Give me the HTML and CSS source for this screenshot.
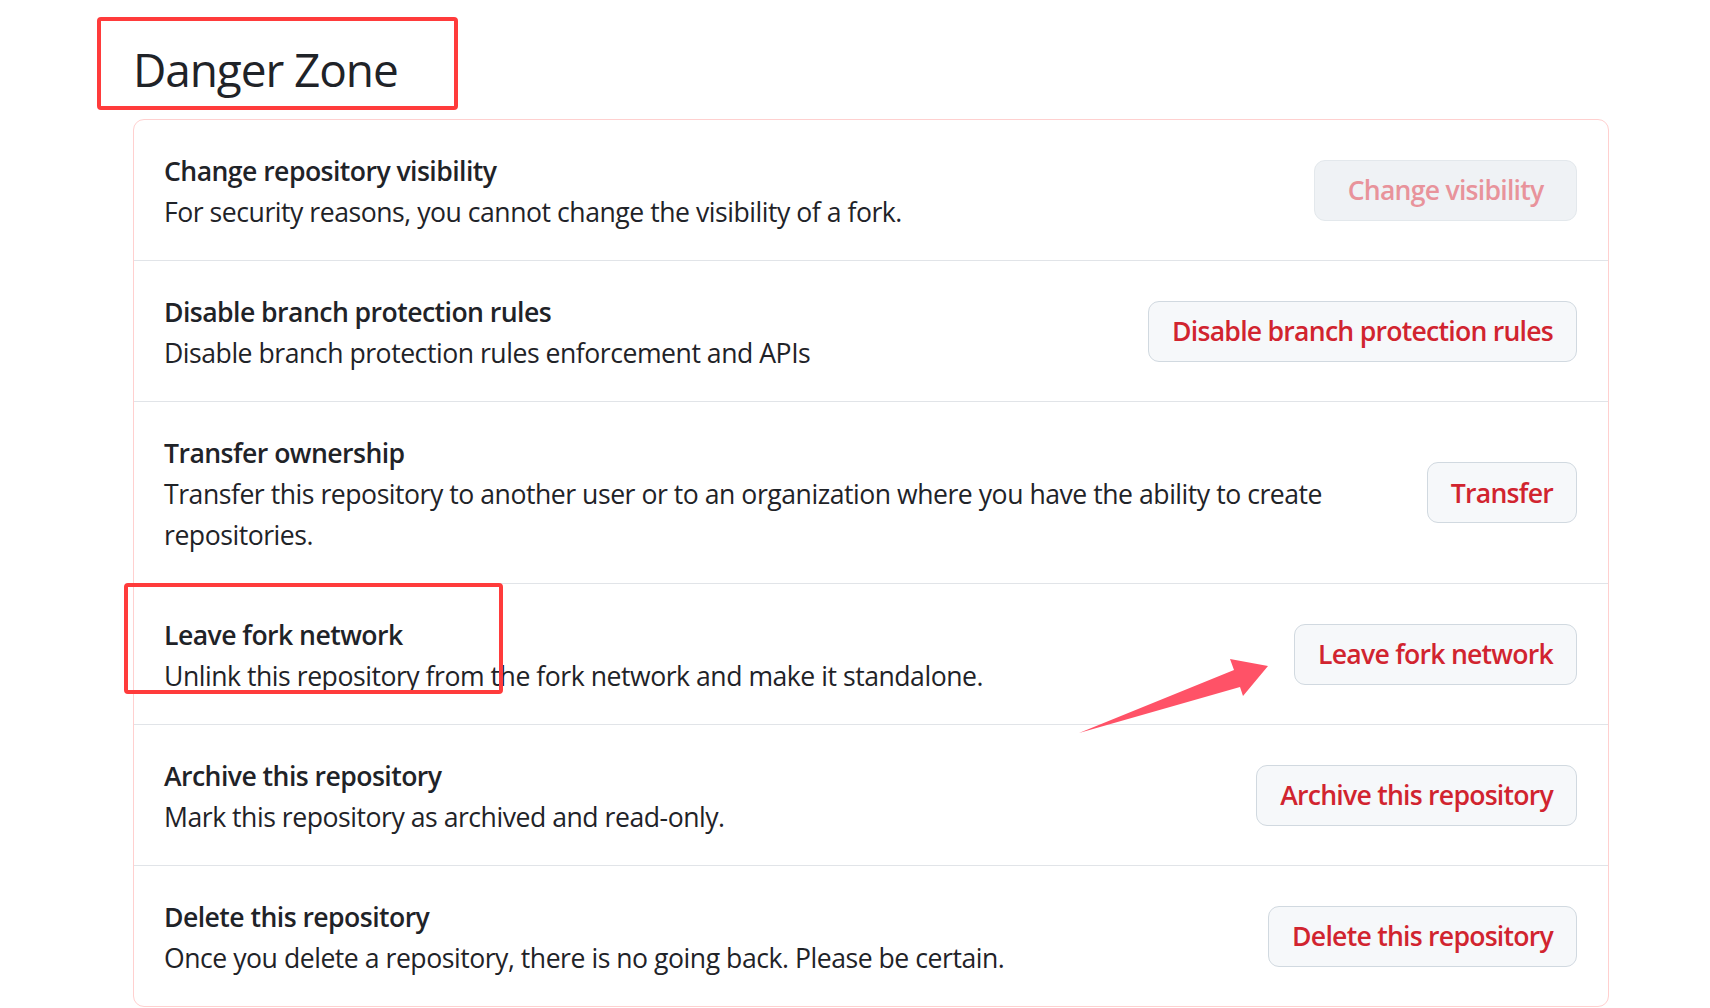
FILE: index.html
```html
<!DOCTYPE html>
<html lang="en">
<head>
<meta charset="utf-8">
<title>Danger Zone</title>
<link rel="stylesheet" href="styles.css">
</head>
<body>
<main class="page">
  <h2 class="heading">Danger Zone</h2>
  <section class="card">
    <div class="row">
      <div class="info">
        <strong class="title">Change repository visibility</strong>
        <p class="desc">For security reasons, you cannot change the visibility of a fork.</p>
      </div>
      <button class="btn btn-disabled" disabled>Change visibility</button>
    </div>
    <div class="row">
      <div class="info">
        <strong class="title">Disable branch protection rules</strong>
        <p class="desc">Disable branch protection rules enforcement and APIs</p>
      </div>
      <button class="btn">Disable branch protection rules</button>
    </div>
    <div class="row">
      <div class="info">
        <strong class="title">Transfer ownership</strong>
        <p class="desc">Transfer this repository to another user or to an organization where you have the ability to create repositories.</p>
      </div>
      <button class="btn">Transfer</button>
    </div>
    <div class="row">
      <div class="info">
        <strong class="title">Leave fork network</strong>
        <p class="desc">Unlink this repository from the fork network and make it standalone.</p>
      </div>
      <button class="btn">Leave fork network</button>
    </div>
    <div class="row">
      <div class="info">
        <strong class="title">Archive this repository</strong>
        <p class="desc">Mark this repository as archived and read-only.</p>
      </div>
      <button class="btn">Archive this repository</button>
    </div>
    <div class="row">
      <div class="info">
        <strong class="title">Delete this repository</strong>
        <p class="desc">Once you delete a repository, there is no going back. Please be certain.</p>
      </div>
      <button class="btn">Delete this repository</button>
    </div>
  </section>
</main>
<div class="mark mark-heading"></div>
<div class="mark mark-fork"></div>
<svg class="arrow" width="200" height="80" viewBox="1075 655 200 80" xmlns="http://www.w3.org/2000/svg">
  <polygon points="1079,733 1234,670 1230,659 1268,666 1243,696 1240,687" fill="#ff5267"/>
</svg>
</body>
</html>
```
FILE: styles.css
```css
html, body {
  margin: 0;
  padding: 0;
  background: #ffffff;
}
body {
  position: relative;
  width: 1710px;
  height: 1008px;
  overflow: hidden;
  font-family: "Open Sans", "Noto Sans", sans-serif;
  color: #1f2328;
}
.page {
  padding-left: 133px;
  width: 1476px;
}
.heading {
  margin: 35px 0 15px 0;
  font-size: 46px;
  font-weight: 400;
  line-height: 69px;
  letter-spacing: -1.1px;
  color: #1f2328;
}
.card {
  border: 1px solid #ffd0cf;
  border-radius: 11px;
}
.row {
  display: flex;
  align-items: center;
  gap: 32px;
  padding: 31px 31px 27px 30px;
  border-top: 1px solid #e1e4e8;
}
.row:first-child {
  border-top: none;
}
.info {
  flex: 1;
  min-width: 0;
  font-size: 26.6px;
  line-height: 41px;
  letter-spacing: -0.47px;
}
.title {
  display: block;
  font-weight: 600;
  letter-spacing: -0.55px;
}
.desc {
  margin: 0;
}
.btn {
  flex: none;
  height: 61px;
  margin-top: -4px;
  padding: 0 23px;
  font-family: "Open Sans", "Noto Sans", sans-serif;
  font-size: 26.6px;
  font-weight: 600;
  letter-spacing: -0.75px;
  color: #d1242f;
  background: #f6f8fa;
  border: 1px solid #d1d9e0;
  border-radius: 11px;
}
.btn-disabled {
  padding: 0 32.5px;
  color: #e8939b;
  background: #eff2f5;
  border-color: #e3e8ec;
}
.mark {
  position: absolute;
  border: 4px solid #ff3b3b;
  border-radius: 4px;
  box-sizing: border-box;
}
.mark-heading {
  left: 97px;
  top: 17px;
  width: 361px;
  height: 93px;
}
.mark-fork {
  left: 124px;
  top: 583px;
  width: 379px;
  height: 111px;
}
.arrow {
  position: absolute;
  left: 1075px;
  top: 655px;
}
```
